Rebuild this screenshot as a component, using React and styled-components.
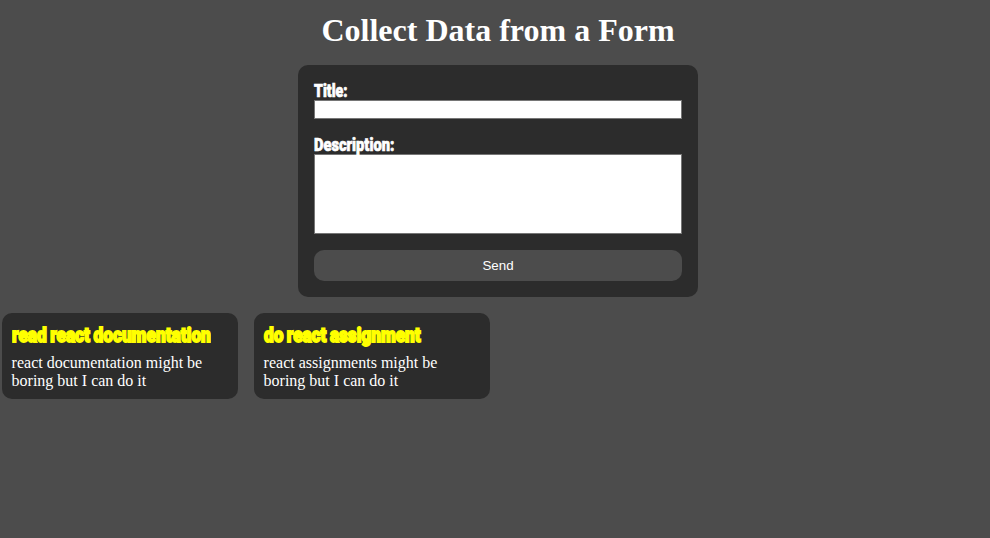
import React from "react";
import styled, { createGlobalStyle } from "styled-components";

const Global = createGlobalStyle`
  * { box-sizing: border-box; margin: 0; padding: 0; }
  body { background: #4c4c4c; color: #fff; font-family: "Liberation Serif", "Times New Roman", serif; font-size: 16px; overflow: hidden; }
`;
const Page = styled.main`
  width: 990px;
  height: 538px;
  padding: 12px 0 0 2px;
`;
const Heading = styled.h1`
  width: 992px;
  font-size: 32px;
  line-height: 37px;
  text-align: center;
`;
const Form = styled.form`
  width: 400px;
  height: 232px;
  margin: 16px 0 0 296px;
  padding: 16px;
  border-radius: 10px;
  background: #2c2c2c;
  display: flex;
  flex-direction: column;
`;
const Label = styled.label`
  display: block;
  height: 19px;
  line-height: 19px;
`;
const Condensed = styled.span`
  display: inline-block;
  font-family: Impact, "Roboto", sans-serif;
  font-weight: 900;
  font-size: ${(p) => p.$size}px;
  line-height: inherit;
  vertical-align: top;
  word-spacing: -1px;
  -webkit-text-stroke: ${(p) => p.$stroke}px currentColor;
  transform: scaleX(${(p) => p.$scale});
  transform-origin: left;
  white-space: nowrap;
`;
const Input = styled.input`
  height: 19px;
  border: 1px solid #767676;
  border-radius: 0;
  background: #fff;
  outline: none;
  margin-bottom: 16px;
`;
const TextArea = styled.textarea`
  height: 80px;
  border: 1px solid #767676;
  border-radius: 0;
  background: #fff;
  resize: none;
  outline: none;
  margin-bottom: 16px;
`;
const Send = styled.button`
  height: 31px;
  border: 0;
  border-radius: 10px;
  background: #4c4c4c;
  color: #fff;
  font: 13.333px "Liberation Sans", Arial, sans-serif;
`;
const Cards = styled.section`
  display: flex;
  gap: 16px;
  margin-top: 16px;
`;
const Card = styled.article`
  width: 236px;
  height: 86px;
  padding: 9px 9.6px;
  border-radius: 10px;
  background: #2c2c2c;
`;
const CardTitle = styled.h2`
  height: 27px;
  line-height: 26px;
  color: #ff0;
`;
const CardText = styled.p`
  margin-top: 5px;
  line-height: 18px;
`;

const notes = [
  { title: "read react documentation", text: "react documentation might be boring but I can do it", scale: 0.822 },
  { title: "do react assignment", text: "react assignments might be boring but I can do it", scale: 0.818 },
];

export default function App() {
  return (
    <Page>
      <Global />
      <Heading>Collect Data from a Form</Heading>
      <Form>
        <Label htmlFor="title"><Condensed $size={18} $stroke={0.7} $scale={0.785}>Title:</Condensed></Label>
        <Input id="title" />
        <Label htmlFor="description"><Condensed $size={18} $stroke={0.7} $scale={0.813}>Description:</Condensed></Label>
        <TextArea id="description" />
        <Send type="button">Send</Send>
      </Form>
      <Cards>
        {notes.map((n) => (
          <Card key={n.title}>
            <CardTitle><Condensed $size={21} $stroke={1.8} $scale={n.scale}>{n.title}</Condensed></CardTitle>
            <CardText>{n.text}</CardText>
          </Card>
        ))}
      </Cards>
    </Page>
  );
}
